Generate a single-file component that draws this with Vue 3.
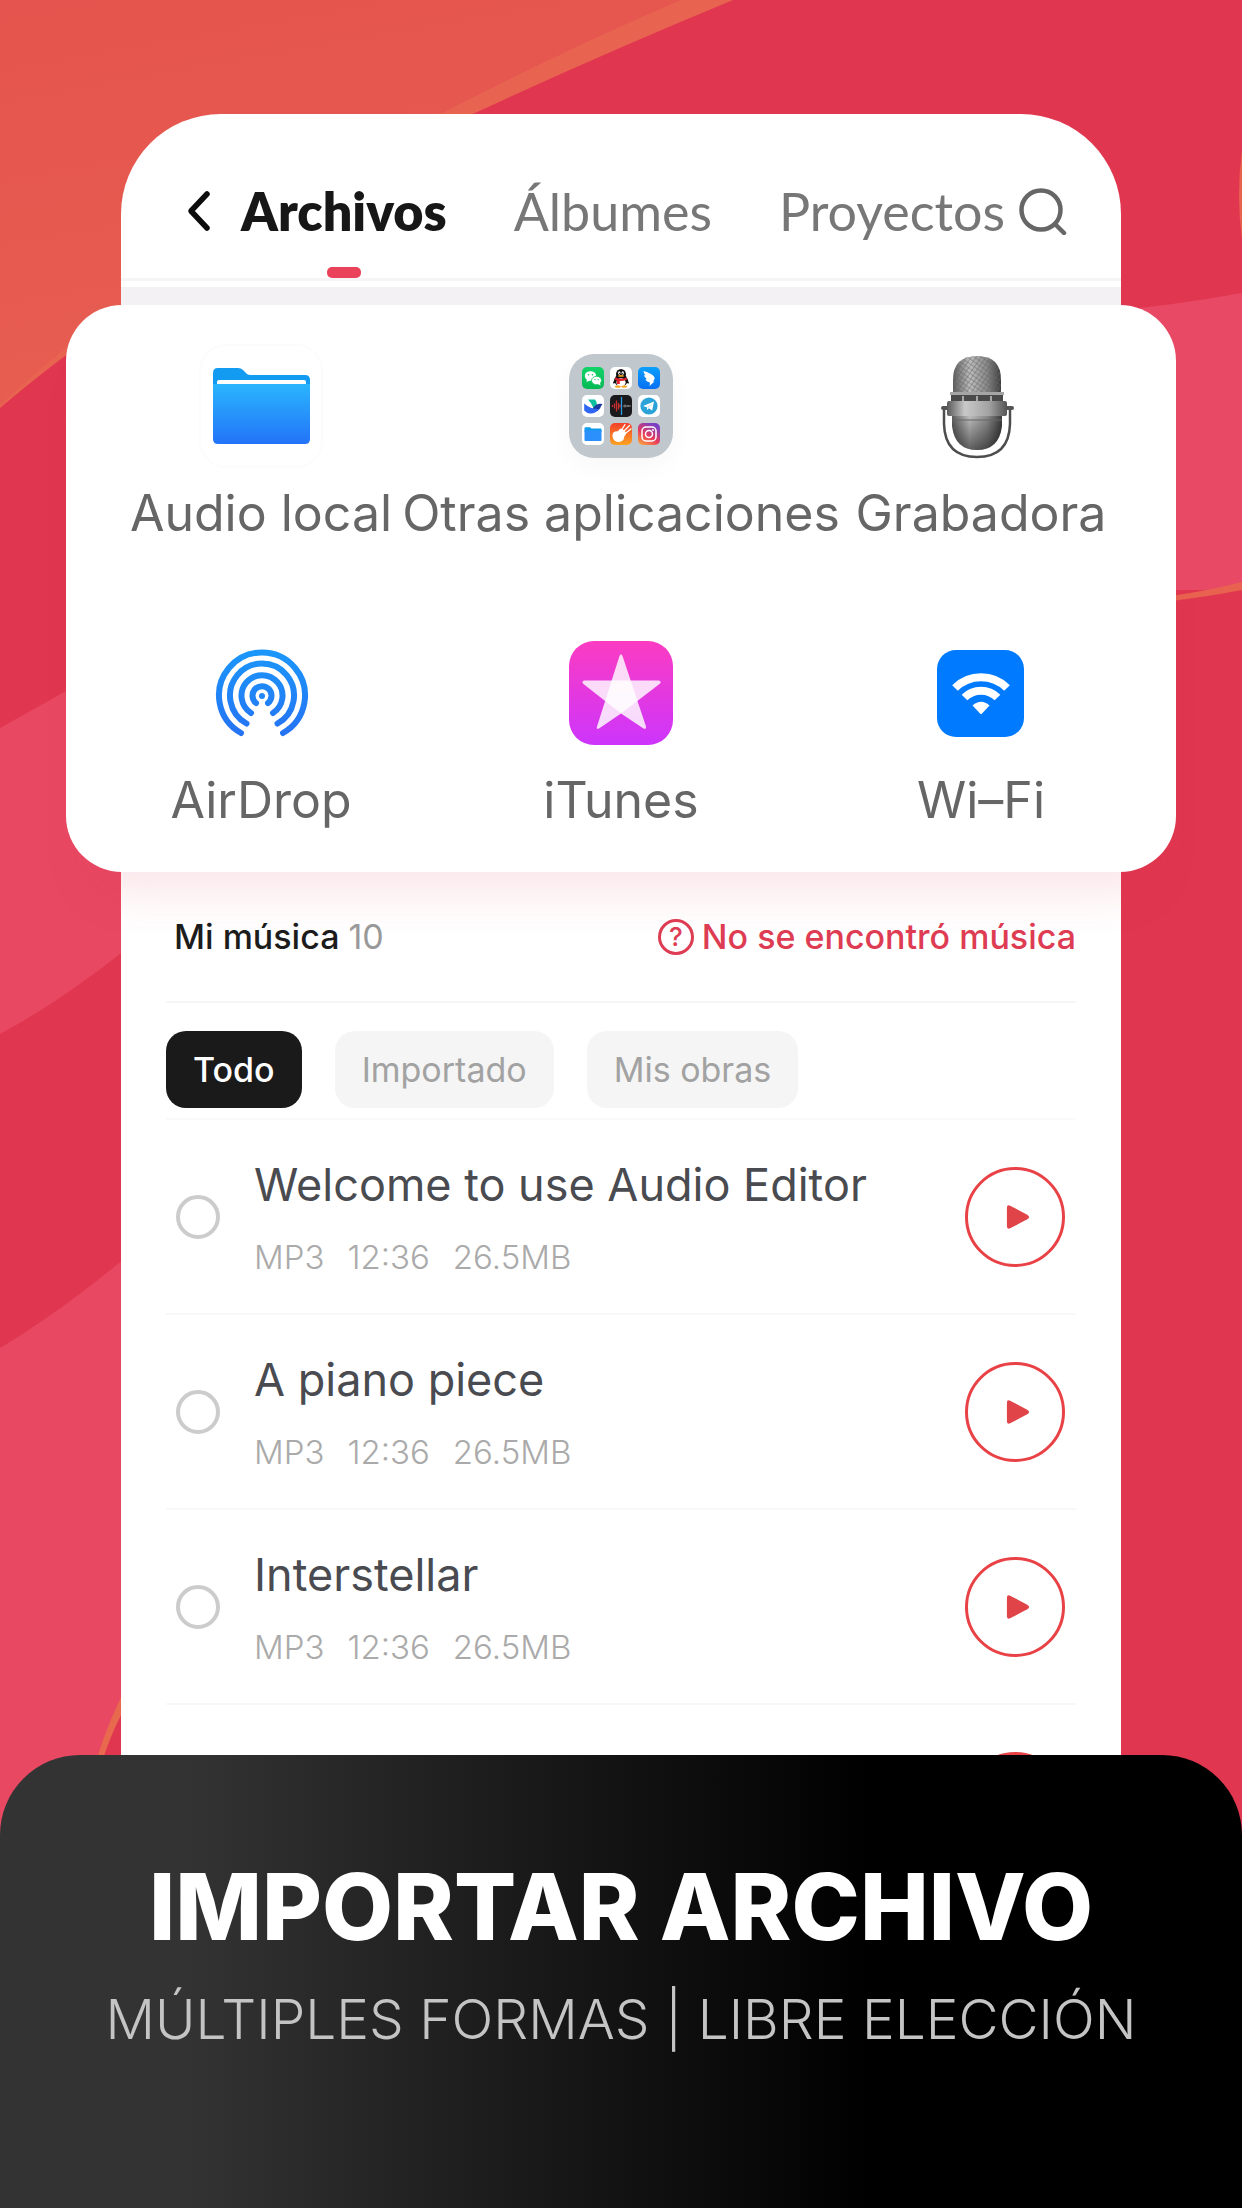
<script setup>
import { ref } from "vue";

const tabs = ["Archivos", "Álbumes", "Proyectos"];
const activeTab = ref("Archivos");

const filters = ["Todo", "Importado", "Mis obras"];
const activeFilter = ref("Todo");

const tracks = ref([
  { id: 1, title: "Welcome to use Audio Editor", meta: ["MP3", "12:36", "26.5MB"], selected: false },
  { id: 2, title: "A piano piece", meta: ["MP3", "12:36", "26.5MB"], selected: false },
  { id: 3, title: "Interstellar", meta: ["MP3", "12:36", "26.5MB"], selected: false },
  { id: 4, title: "", meta: [], selected: false },
]);
</script>

<template>
  <div class="page">
    <svg class="backdrop" viewBox="0 0 1242 2208" preserveAspectRatio="none" aria-hidden="true">
      <defs>
        <linearGradient id="bg-orange" x1="0" y1="0" x2="0.3" y2="1">
          <stop offset="0" stop-color="#e5544e" />
          <stop offset="1" stop-color="#e75e50" />
        </linearGradient>
      </defs>
      <rect width="1242" height="2208" fill="#e0364f" />
      <path d="M0 0H733Q600 55 475 113Q180 255 0 408Z" fill="#e96351" />
      <path d="M0 0H681Q560 52 443 113Q165 252 0 405Z" fill="url(#bg-orange)" />
      <path d="M1100 312Q1170 306 1242 293V590H1100Z" fill="#e84a66" />
      <path d="M1100 604Q1190 596 1242 582V590Q1180 602 1100 608Z" fill="#e8624f" />
      <path d="M1242 150Q1236 195 1242 240Z" fill="#e8624f" />
      <path d="M0 728L66 691L130 665V946Q60 1002 0 1034Z" fill="#e84862" />
      <path d="M0 1348Q60 1312 130 1254V1690L96 1760L40 1900H0Z" fill="#e84862" />
      <path d="M130 1680Q108 1720 95 1765H101Q114 1724 130 1700Z" fill="#e9694f" />
    </svg>

    <main class="phone">
      <header class="topbar">
        <button class="icon-btn" type="button" aria-label="Volver">
          <svg width="24" height="42" viewBox="0 0 24 42" fill="none" stroke="#0c0c0c" stroke-width="5.500" stroke-linecap="round" stroke-linejoin="round">
            <path d="M20 4L4 21L20 38" />
          </svg>
        </button>
        <nav class="tabs">
          <button
            v-for="tab in tabs"
            :key="tab"
            type="button"
            class="tab"
            :class="{ active: activeTab === tab }"
            @click="activeTab = tab"
          >
            {{ tab }}
          </button>
        </nav>
        <button class="icon-btn" type="button" aria-label="Buscar">
          <svg width="48" height="48" viewBox="0 0 48 48" fill="none" stroke="#666" stroke-width="4.500" stroke-linecap="round">
            <circle cx="22" cy="23" r="19.500" />
            <path d="M36 37L45 46" />
          </svg>
        </button>
      </header>
      <div class="strip"></div>

      <section class="sources">
        <button class="source" type="button">
          <svg class="source-icon" viewBox="0 0 104 104">
            <defs>
              <linearGradient id="folder-front" x1="0" y1="0" x2="0" y2="1">
                <stop offset="0" stop-color="#2ab5fd" />
                <stop offset="1" stop-color="#2373f8" />
              </linearGradient>
            </defs>
            <rect x="-9" y="-9" width="122" height="122" rx="26" fill="#fff" stroke="#fcfcfc" stroke-width="2" />
            <path d="M4 32V19Q4 14 9 14H29Q32 14 34 16L38 20Q39 21 42 21H96Q101 21 101 26V32Z" fill="#129bf0" />
            <path d="M8 31V28Q8 26 10 26H95Q97 26 97 28V31Z" fill="#fff" />
            <path d="M4 30H101V85Q101 90 96 90H9Q4 90 4 85Z" fill="url(#folder-front)" />
          </svg>
          <span>Audio local</span>
        </button>

        <button class="source" type="button">
          <svg class="source-icon apps" viewBox="0 0 104 104">
            <defs>
              <linearGradient id="mini-gb" x1="0" y1="0" x2="0" y2="1">
                <stop offset="0" stop-color="#f4402c" />
                <stop offset="1" stop-color="#fca321" />
              </linearGradient>
              <linearGradient id="mini-ig" x1="0" y1="1" x2="0.6" y2="0">
                <stop offset="0" stop-color="#fdb13a" />
                <stop offset="0.5" stop-color="#ea3a5a" />
                <stop offset="1" stop-color="#7a3fc6" />
              </linearGradient>
              <linearGradient id="mini-wx" x1="0" y1="0" x2="0" y2="1">
                <stop offset="0" stop-color="#12d368" />
                <stop offset="1" stop-color="#05b955" />
              </linearGradient>
              <linearGradient id="mini-bird" x1="0" y1="0" x2="0" y2="1">
                <stop offset="0" stop-color="#0aa0fb" />
                <stop offset="1" stop-color="#0a6ff4" />
              </linearGradient>
            </defs>
            <rect width="104" height="104" rx="25" fill="#c0c7cd" />
            <!-- chat -->
            <g transform="translate(13 13)">
              <rect width="22" height="22" rx="5" fill="url(#mini-wx)" />
              <ellipse cx="8.500" cy="9" rx="5.700" ry="4.800" fill="#fff" />
              <path d="M5 12L4.500 15L8 13.500Z" fill="#fff" />
              <ellipse cx="14.500" cy="13.500" rx="5" ry="4.200" fill="#fff" stroke="#0cc45d" stroke-width="0.800" />
              <path d="M16 17L18.500 18.500L18 15.500Z" fill="#fff" />
              <circle cx="6.600" cy="7.800" r="0.800" fill="#0cc45d" />
              <circle cx="10.400" cy="7.800" r="0.800" fill="#0cc45d" />
              <circle cx="13" cy="12.600" r="0.700" fill="#0cc45d" />
              <circle cx="16.200" cy="12.600" r="0.700" fill="#0cc45d" />
            </g>
            <!-- penguin -->
            <g transform="translate(41 13)">
              <rect width="22" height="22" rx="5" fill="#fff" />
              <ellipse cx="11" cy="13.500" rx="6.600" ry="6" fill="#111" />
              <path d="M5 11L2.800 16.500L5.500 16ZM17 11L19.200 16.500L16.500 16Z" fill="#111" />
              <ellipse cx="11" cy="7.500" rx="5" ry="5.500" fill="#111" />
              <ellipse cx="11" cy="15.500" rx="4.600" ry="4.200" fill="#fff" />
              <ellipse cx="9.300" cy="6" rx="1.200" ry="1.700" fill="#fff" />
              <ellipse cx="12.700" cy="6" rx="1.200" ry="1.700" fill="#fff" />
              <circle cx="9.600" cy="6.300" r="0.600" fill="#111" />
              <circle cx="12.400" cy="6.300" r="0.600" fill="#111" />
              <ellipse cx="11" cy="8.900" rx="3" ry="0.900" fill="#f7a51b" />
              <path d="M5.500 10.500Q11 13 16.500 10.500L17 12.700Q13 14.300 9.800 14V17H7V13.600L5 12.700Z" fill="#e3202c" />
              <ellipse cx="7.800" cy="19.600" rx="3" ry="1.200" fill="#f7a51b" />
              <ellipse cx="14.200" cy="19.600" rx="3" ry="1.200" fill="#f7a51b" />
            </g>
            <!-- bird -->
            <g transform="translate(69 13)">
              <rect width="22" height="22" rx="5" fill="url(#mini-bird)" />
              <path d="M5.500 4Q13 6 16 9.500Q17.500 11 16 13L15 14.500H16.500L11.500 19L12 15.500Q8 14.500 7.500 12L9 12.200Q6.200 10.500 6 8L7.500 8.500Q5.500 6.500 5.500 4Z" fill="#fff" />
            </g>
            <!-- swallow -->
            <g transform="translate(13 41)">
              <rect width="22" height="22" rx="5" fill="#fff" />
              <path d="M6 4.500H13Q15.500 7.500 15 10L11.500 13Q9.500 8 6 4.500Z" fill="#0bbf9f" />
              <path d="M11 13Q15 7.500 20.500 9Q19 10.500 18 13.500Q15.500 17.500 11 16Z" fill="#1b3aa0" />
              <path d="M2.200 8.500Q8 14 17 14Q13 19 8 18.500Q4.500 18 2.200 15.500Z" fill="#2f66f3" />
            </g>
            <!-- voice memo -->
            <g transform="translate(41 41)">
              <rect width="22" height="22" rx="5" fill="#1a191c" />
              <path d="M2.500 10V12M4.500 8.500V13.500M6.500 5.500V16.500M8.500 8V14.500M10 9.500V12.500" stroke="#c5302f" stroke-width="1.300" />
              <path d="M13 11H21M15 9.500V12.500M18 10V12" stroke="#8b8b8d" stroke-width="1" />
              <path d="M11.500 2V20" stroke="#2a9de8" stroke-width="1.300" />
            </g>
            <!-- paper plane -->
            <g transform="translate(69 41)">
              <rect width="22" height="22" rx="5" fill="#fff" />
              <circle cx="11" cy="11" r="8.600" fill="#2ba2d8" />
              <path d="M5 11L16 6.500L14.200 15.500L10.800 13.200L9.200 15L8.800 12.200Z" fill="#fff" />
              <path d="M8.900 12.200L14 8.500L10.200 12.800Z" fill="#b8dcef" />
            </g>
            <!-- folder -->
            <g transform="translate(13 69)">
              <rect width="22" height="22" rx="5" fill="#fff" />
              <path d="M2.500 5Q2.500 4.200 3.300 4.200H8L9.500 5.600H18.700Q19.500 5.600 19.500 6.400V9H2.500Z" fill="#129bf0" />
              <path d="M2.500 7.500H19.500V17Q19.500 18 18.500 18H3.500Q2.500 18 2.500 17Z" fill="#2b90fb" />
            </g>
            <!-- guitar -->
            <g transform="translate(41 69)">
              <rect width="22" height="22" rx="5" fill="url(#mini-gb)" />
              <path d="M13 9L19.500 2.500M11.500 7L15 1.500M14.500 11L21 6" stroke="#fff" stroke-width="1.300" stroke-linecap="round" />
              <path d="M12.500 6Q10 5 9 7Q8 8.500 5 8.500Q2 9.500 2.500 13.500Q3.500 19 9 19Q13.500 18.500 14 15Q14 13 15.500 12Q17 10.500 15.500 9Z" fill="#fff" />
            </g>
            <!-- camera -->
            <g transform="translate(69 69)">
              <rect width="22" height="22" rx="5" fill="url(#mini-ig)" />
              <rect x="4" y="4" width="14" height="14" rx="4" fill="none" stroke="#fff" stroke-width="1.500" />
              <circle cx="11" cy="11" r="3.500" fill="none" stroke="#fff" stroke-width="1.500" />
              <circle cx="15" cy="7" r="0.900" fill="#fff" />
            </g>
          </svg>
          <span>Otras aplicaciones</span>
        </button>

        <button class="source" type="button">
          <svg class="source-icon" viewBox="0 0 104 104">
            <defs>
              <linearGradient id="mic-metal" x1="0" y1="0" x2="1" y2="0">
                <stop offset="0" stop-color="#5c5c5c" />
                <stop offset="0.350" stop-color="#bdbdbd" />
                <stop offset="0.700" stop-color="#8a8a8a" />
                <stop offset="1" stop-color="#3c3c3c" />
              </linearGradient>
              <linearGradient id="mic-band" x1="0" y1="0" x2="1" y2="0">
                <stop offset="0" stop-color="#5a5a5a" />
                <stop offset="0.300" stop-color="#c9c9c9" />
                <stop offset="0.700" stop-color="#a2a2a2" />
                <stop offset="1" stop-color="#555" />
              </linearGradient>
              <linearGradient id="mic-shade" x1="0" y1="0" x2="0" y2="1">
                <stop offset="0" stop-color="#000" stop-opacity="0" />
                <stop offset="1" stop-color="#000" stop-opacity="0.500" />
              </linearGradient>
              <pattern id="mic-mesh" width="4" height="4" patternUnits="userSpaceOnUse" patternTransform="rotate(35)">
                <path d="M0 0H4M0 0V4" stroke="#666" stroke-width="0.900" />
              </pattern>
            </defs>
            <path d="M15 54V70Q16 103 48 103Q80 103 81 70V54" fill="none" stroke="#4d4d4d" stroke-width="2.500" />
            <path d="M14 54H20M76 54H83" stroke="#555" stroke-width="4" stroke-linecap="round" />
            <path d="M24 40V26Q24 2 48 2Q72 2 72 26V40Z" fill="url(#mic-metal)" />
            <path d="M24 40V26Q24 2 48 2Q72 2 72 26V40Z" fill="url(#mic-mesh)" />
            <rect x="22" y="38" width="52" height="10" rx="1" fill="#4a4a4a" />
            <path d="M21 39.500H75" stroke="#a5a5a5" stroke-width="3" />
            <path d="M34 42V47M48 42V47M62 42V47" stroke="#a8a8a8" stroke-width="2" />
            <path d="M23 62H73V72Q70 96 48 96Q26 96 23 72Z" fill="url(#mic-metal)" />
            <path d="M23 62H73V72Q70 96 48 96Q26 96 23 72Z" fill="url(#mic-shade)" />
            <path d="M23 66H73" stroke="#666" stroke-width="1" />
            <rect x="18" y="47" width="60" height="15" rx="2" fill="url(#mic-band)" />
          </svg>
          <span>Grabadora</span>
        </button>

        <button class="source" type="button">
          <svg class="source-icon" viewBox="0 0 104 104" fill="none" stroke="url(#airdrop)" stroke-width="6" stroke-linecap="round">
            <defs>
              <linearGradient id="airdrop" gradientUnits="userSpaceOnUse" x1="52" y1="9" x2="52" y2="96">
                <stop offset="0" stop-color="#1a97fa" />
                <stop offset="1" stop-color="#2672f3" />
              </linearGradient>
            </defs>
            <path d="M32 92A43 43 0 1 1 74 92" />
            <path d="M37.500 82.500A32 32 0 1 1 68.500 82.500" />
            <path d="M42 72A20.500 20.500 0 1 1 64 72" />
            <path d="M47 62A9.500 9.500 0 1 1 59 62" />
            <circle cx="53" cy="55" r="3" fill="#2286f7" stroke="none" />
          </svg>
          <span>AirDrop</span>
        </button>

        <button class="source" type="button">
          <svg class="source-icon" viewBox="0 0 104 104">
            <defs>
              <linearGradient id="itunes" x1="0" y1="0" x2="0" y2="1">
                <stop offset="0" stop-color="#fb3cc2" />
                <stop offset="1" stop-color="#cd35fc" />
              </linearGradient>
            </defs>
            <rect width="104" height="104" rx="25" fill="url(#itunes)" />
            <g fill="#fff" fill-opacity="0.820" stroke-linejoin="round">
              <path d="M50.500 15Q52 11.500 53.500 15L77 85.500Q77.500 89 74.500 87.500L52 72.500L30 87.500Q27 89 28 85.500Z" />
              <path d="M15 39.500H90Q93 41 90.500 43L52 72.500L14.500 43Q12 41 15 39.500Z" />
            </g>
          </svg>
          <span>iTunes</span>
        </button>

        <button class="source" type="button">
          <svg class="source-icon" viewBox="0 0 104 104">
            <rect x="8" y="9" width="87" height="87" rx="19" fill="#007aff" />
            <g fill="none" stroke="#fff" stroke-width="8">
              <path d="M26 47A37 37 0 0 1 78 47" />
              <path d="M35.500 56.500A23.500 23.500 0 0 1 68.500 56.500" />
            </g>
            <path d="M43.500 64.500Q52 57 60.500 64.500L53 72.500Q52 73.500 51 72.500Z" fill="#fff" />
          </svg>
          <span>Wi–Fi</span>
        </button>
      </section>

      <section class="library">
        <div class="library-head">
          <h2>Mi música <span class="count">10</span></h2>
          <a href="#" class="help"><span class="help-mark">?</span>No se encontró música</a>
        </div>

        <div class="filters">
          <button
            v-for="item in filters"
            :key="item"
            type="button"
            class="chip"
            :class="{ active: activeFilter === item }"
            @click="activeFilter = item"
          >
            {{ item }}
          </button>
        </div>

        <ul class="tracks">
          <li v-for="track in tracks" :key="track.id" class="track">
            <input :id="`track-${track.id}`" v-model="track.selected" class="pick" type="checkbox" />
            <label class="info" :for="`track-${track.id}`">
              <span class="title">{{ track.title }}</span>
              <span class="meta">
                <span v-for="part in track.meta" :key="part">{{ part }}</span>
              </span>
            </label>
            <button class="play" type="button" :aria-label="`Reproducir ${track.title}`">
              <svg width="24" height="26" viewBox="0 0 26 28">
                <path d="M1 4Q1 0 5 2L23 11.500Q27 14 23 16.500L5 26Q1 28 1 24Z" fill="#e14448" />
              </svg>
            </button>
          </li>
        </ul>
      </section>
    </main>

    <footer class="banner">
      <h1>IMPORTAR ARCHIVO</h1>
      <p>MÚLTIPLES FORMAS | LIBRE ELECCIÓN</p>
    </footer>
  </div>
</template>

<style>
body {
  margin: 0;
}
</style>

<style scoped>
.page {
  position: relative;
  display: flex;
  flex-direction: column;
  box-sizing: border-box;
  min-height: 100vh;
  padding-top: 114px;
  overflow: hidden;
  background: #e0364f;
  font-family: Inter, "Liberation Sans", sans-serif;
}

.backdrop {
  position: absolute;
  inset: 0;
  width: 100%;
  height: 100%;
}

button {
  padding: 0;
  border: 0;
  background: none;
  font: inherit;
  color: inherit;
  cursor: pointer;
}

.phone {
  position: relative;
  margin: 0 121px;
  background: #fff;
  border-radius: 100px 100px 0 0;
}

/* top bar */
.topbar {
  display: flex;
  align-items: flex-start;
  box-sizing: border-box;
  height: 167px;
  padding: 67px 54px 0 66px;
  border-bottom: 3px solid #f6f4f6;
}

.icon-btn {
  display: flex;
  align-items: center;
  height: 60px;
}

.tabs {
  display: flex;
  flex: 1;
  align-self: stretch;
  gap: 67px;
  margin-left: 30px;
}

.tab {
  position: relative;
  display: flex;
  align-items: flex-start;
  font-family: Lato, "Open Sans", sans-serif;
  font-size: 52px;
  line-height: 60px;
  color: #777;
}

.tab.active {
  font-weight: 800;
  color: #171717;
}

.tab.active::after {
  content: "";
  position: absolute;
  bottom: 0;
  left: 50%;
  width: 34px;
  height: 11px;
  margin-left: -17px;
  border-radius: 5px;
  background: #ea425b;
}

.strip {
  height: 18px;
  margin-top: 6px;
  background: #f3f1f4;
}

/* import sources */
.sources {
  display: grid;
  grid-template-columns: repeat(3, minmax(0, 1fr));
  row-gap: 98px;
  margin: 0 -55px;
  padding: 49px 15px 42px;
  border-radius: 56px;
  background: #fff;
  box-shadow: 0 44px 44px -20px rgba(224, 54, 79, 0.12);
}

.source {
  display: flex;
  flex-direction: column;
  align-items: center;
  gap: 25px;
  font-size: 50px;
  line-height: 60px;
  color: #666;
  white-space: nowrap;
}

.source-icon {
  width: 104px;
  height: 104px;
  overflow: visible;
}

.source-icon.apps {
  border-radius: 25px;
  box-shadow: 0 10px 24px rgba(0, 0, 0, 0.03);
}

/* library */
.library {
  padding: 0 45px;
}

.library-head {
  display: flex;
  align-items: center;
  justify-content: space-between;
  height: 129px;
  padding-left: 8px;
  border-bottom: 2px solid #f6f6f6;
}

.library-head h2 {
  margin: 0;
  font-size: 34px;
  font-weight: 500;
  color: #1c1c1c;
}

.count {
  font-weight: 400;
  color: #999;
}

.help {
  display: flex;
  align-items: center;
  gap: 8px;
  font-size: 34px;
  font-weight: 500;
  color: #de3c53;
  text-decoration: none;
}

.help-mark {
  box-sizing: border-box;
  width: 36px;
  height: 36px;
  border: 3px solid #de3c53;
  border-radius: 50%;
  font-size: 26px;
  line-height: 30px;
  text-align: center;
}

.filters {
  display: flex;
  gap: 33px;
  padding: 28px 0 10px;
  border-bottom: 2px solid #fafafa;
}

.chip {
  height: 77px;
  padding: 0 27px;
  border-radius: 20px;
  background: #f5f5f5;
  font-size: 34px;
  color: #a2a2a2;
}

.chip.active {
  background: #1a1a1a;
  font-weight: 500;
  color: #fff;
}

.tracks {
  margin: 0;
  padding: 0;
  list-style: none;
}

.track {
  display: flex;
  align-items: center;
  box-sizing: border-box;
  height: 195px;
  padding: 0 11px 0 10px;
  border-bottom: 2px solid #f8f8f8;
}

.pick {
  flex: none;
  width: 44px;
  height: 44px;
  margin: 0;
  border: 4px solid #ccc;
  border-radius: 50%;
  appearance: none;
}

.pick:checked {
  border-color: #e14448;
  background: #e14448;
}

.info {
  display: flex;
  flex: 1;
  flex-direction: column;
  gap: 24px;
  margin-left: 34px;
}

.title {
  font-size: 45px;
  line-height: 56px;
  color: #494b50;
}

.meta {
  display: flex;
  gap: 23px;
  font-size: 33px;
  font-weight: 300;
  line-height: 40px;
  color: #aaa;
}

.play {
  display: flex;
  flex: none;
  align-items: center;
  justify-content: center;
  width: 100px;
  height: 100px;
  padding-left: 6px;
  border: 3px solid #e94246;
  border-radius: 50%;
}

/* bottom banner */
.banner {
  position: relative;
  flex: 1;
  margin-top: -145px;
  padding: 92px 40px 140px;
  border-radius: 80px 80px 0 0;
  background: linear-gradient(90deg, #333 15%, #000 70%);
  text-align: center;
}

.banner h1 {
  margin: 0;
  font-size: 92px;
  font-weight: 800;
  line-height: 120px;
  color: #fff;
}

.banner p {
  margin: 16px 0 0;
  font-size: 55px;
  font-weight: 300;
  line-height: 72px;
  color: #c4c4c4;
}
</style>
